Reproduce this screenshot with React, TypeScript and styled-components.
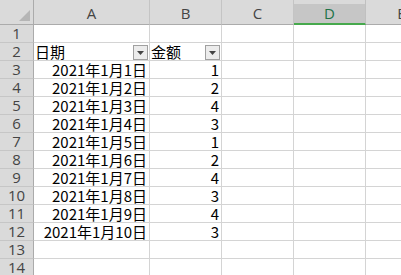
import React from "react";
import styled, { createGlobalStyle } from "styled-components";

const Global = createGlobalStyle`
  html, body { margin: 0; padding: 0; background: #ffffff; overflow: hidden; }
  #root { width: 401px; height: 275px; overflow: hidden; }
`;

const HEADER_BG = "#dadada";
const GRID = "#d4d4d4";

const Sheet = styled.div`
  display: grid;
  grid-template-columns: 34px 116px 72px 72px 72px 72px;
  grid-template-rows: 25px;
  grid-auto-rows: 18px;
  width: 401px;
  height: 275px;
  overflow: hidden;
  font-family: "Noto Sans CJK SC", "Noto Sans", sans-serif;
`;

const Corner = styled.div`
  box-sizing: border-box;
  background: ${HEADER_BG};
  border-right: 1px solid #ababab;
  border-bottom: 1px solid #ababab;
  display: flex;
  align-items: flex-end;
  justify-content: flex-end;
  padding: 0 3px 3px 0;
`;

const ColHeader = styled.div<{ $selected?: boolean }>`
  box-sizing: border-box;
  background: ${(p) =>
    p.$selected
      ? `linear-gradient(to bottom, ${HEADER_BG} 4px, #c6c6c6 4px)`
      : HEADER_BG};
  border-right: 1px solid ${(p) => (p.$selected ? "#c0c0c0" : "#c4c4c4")};
  border-bottom: ${(p) => (p.$selected ? "2px solid #47a94d" : "1px solid #ababab")};
  display: flex;
  align-items: center;
  justify-content: center;
  padding-top: ${(p) => (p.$selected ? "3px" : "1px")};
  font-family: "Open Sans", "Noto Sans", sans-serif;
  font-size: 15px;
  line-height: 20px;
  color: ${(p) => (p.$selected ? "#217346" : "#444444")};
`;

const RowHeader = styled.div`
  box-sizing: border-box;
  background: ${HEADER_BG};
  border-right: 1px solid #ababab;
  border-bottom: 1px solid #c6c6c6;
  display: flex;
  align-items: center;
  justify-content: center;
  font-family: "Open Sans", "Noto Sans", sans-serif;
  font-size: 15px;
  color: #444444;
  line-height: 17px;
`;

const Cell = styled.div<{ $align?: "left" | "right" }>`
  box-sizing: border-box;
  border-right: 1px solid ${GRID};
  border-bottom: 1px solid ${GRID};
  display: flex;
  align-items: center;
  justify-content: ${(p) => (p.$align === "right" ? "flex-end" : "flex-start")};
  padding: 0 2px 0 2px;
  font-size: 15px;
  line-height: 17px;
  color: #000000;
  white-space: nowrap;
`;

const FilterCell = styled(Cell)`
  justify-content: space-between;
  align-items: flex-end;
  padding: 0 1px 0 1px;
`;

const HeaderText = styled.span`
  align-self: center;
`;

const FilterButton = styled.div`
  box-sizing: border-box;
  width: 15px;
  height: 15px;
  border: 1px solid #a0a0a0;
  background: #ececec;
  display: flex;
  align-items: center;
  justify-content: center;
  flex-shrink: 0;
`;

const Triangle = () => (
  <svg width="11" height="11" viewBox="0 0 11 11">
    <path d="M11 0 L11 11 L0 11 Z" fill="#b5b5b5" />
  </svg>
);

const Arrow = () => (
  <svg width="7" height="4" viewBox="0 0 7 4">
    <path d="M0 0 H7 L3.5 4 Z" fill="#444444" />
  </svg>
);

const cols = ["A", "B", "C", "D", "E"];
const values = [1, 2, 4, 3, 1, 2, 4, 3, 4, 3];

export default function App() {
  const rows: React.ReactNode[] = [];
  for (let r = 1; r <= 14; r++) {
    rows.push(<RowHeader key={`h${r}`}>{r}</RowHeader>);
    if (r === 2) {
      rows.push(
        <FilterCell key="a2">
          <HeaderText>日期</HeaderText>
          <FilterButton>
            <Arrow />
          </FilterButton>
        </FilterCell>
      );
      rows.push(
        <FilterCell key="b2">
          <HeaderText>金额</HeaderText>
          <FilterButton>
            <Arrow />
          </FilterButton>
        </FilterCell>
      );
    } else if (r >= 3 && r <= 12) {
      const i = r - 2;
      rows.push(
        <Cell key={`a${r}`} $align="right">
          2021年1月{i}日
        </Cell>
      );
      rows.push(
        <Cell key={`b${r}`} $align="right">
          {values[i - 1]}
        </Cell>
      );
    } else {
      rows.push(<Cell key={`a${r}`} />);
      rows.push(<Cell key={`b${r}`} />);
    }
    rows.push(<Cell key={`c${r}`} />);
    rows.push(<Cell key={`d${r}`} />);
    rows.push(<Cell key={`e${r}`} />);
  }

  return (
    <>
      <Global />
      <Sheet>
        <Corner>
          <Triangle />
        </Corner>
        {cols.map((c) => (
          <ColHeader key={c} $selected={c === "D"}>
            {c}
          </ColHeader>
        ))}
        {rows}
      </Sheet>
    </>
  );
}
